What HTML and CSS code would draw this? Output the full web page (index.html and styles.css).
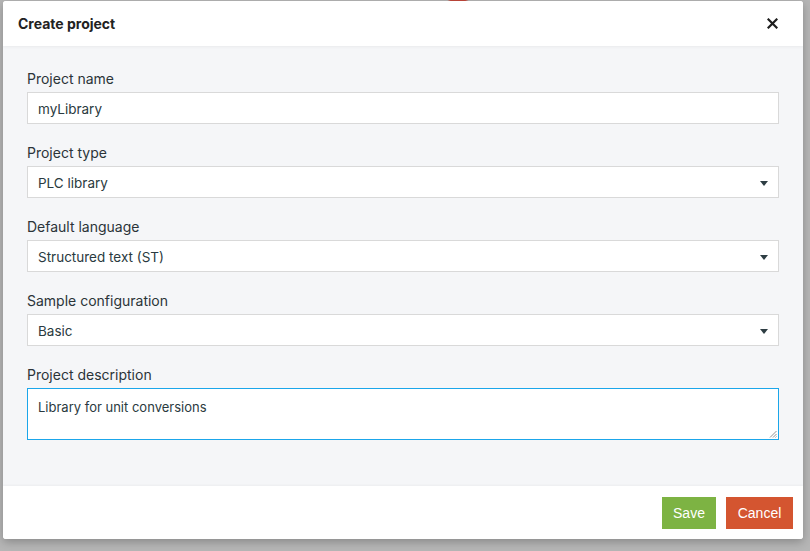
FILE: index.html
```html
<!DOCTYPE html>
<html>
<head>
<meta charset="utf-8">
<link rel="stylesheet" href="styles.css">
</head>
<body>
<div class="backdrop">
  <div class="bg-blob"></div>
  <div class="modal">
    <div class="modal-header">
      <span class="title">Create project</span>
      <span class="close" aria-label="close">
        <svg width="11" height="11" viewBox="0 0 11 11"><path d="M1.5 1.5 L9.5 9.5 M9.5 1.5 L1.5 9.5" stroke="#1e1e1e" stroke-width="2.2" stroke-linecap="square"/></svg>
      </span>
    </div>
    <div class="modal-body">
      <div class="field">
        <label class="label">Project name</label>
        <div class="input">myLibrary</div>
      </div>
      <div class="field">
        <label class="label">Project type</label>
        <div class="input select">PLC library<span class="caret"></span></div>
      </div>
      <div class="field">
        <label class="label">Default language</label>
        <div class="input select">Structured text (ST)<span class="caret"></span></div>
      </div>
      <div class="field">
        <label class="label">Sample configuration</label>
        <div class="input select">Basic<span class="caret"></span></div>
      </div>
      <div class="field last">
        <label class="label">Project description</label>
        <div class="input textarea">Library for unit conversions
          <svg class="grip" width="8" height="8" viewBox="0 0 8 8"><path d="M7.5 1 L1 7.5 M7.5 4 L4 7.5 M7.5 6.5 L6.5 7.5" stroke="#777" stroke-width="0.8"/></svg>
        </div>
      </div>
    </div>
    <div class="modal-footer">
      <button class="btn save">Save</button>
      <button class="btn cancel">Cancel</button>
    </div>
  </div>
</div>
</body>
</html>
```
FILE: styles.css
```css
* { box-sizing: border-box; }
html, body { margin: 0; padding: 0; }
body {
  width: 810px;
  height: 551px;
  overflow: hidden;
  background: #b6b6b6;
  font-family: Inter, "Noto Sans", sans-serif;
  color: #2b3940;
}
.backdrop {
  position: relative;
  width: 810px;
  height: 551px;
  padding: 1px 0 0 3px;
}
.bg-blob {
  position: absolute;
  left: 442px;
  top: -14px;
  width: 32px;
  height: 16px;
  border-radius: 50%;
  background: #c2473b;
}
.modal {
  position: relative;
  width: 800px;
  height: 538px;
  background: #fff;
  border-radius: 3px;
  box-shadow: 0 3px 10px rgba(0,0,0,0.25);
  display: flex;
  flex-direction: column;
  overflow: hidden;
}
.modal-header {
  height: 45px;
  display: flex;
  align-items: center;
  justify-content: space-between;
  padding: 0 25px 0 15px;
  background: #fff;
  box-shadow: 0 1px 3px rgba(0,0,0,0.05);
  position: relative;
  z-index: 1;
}
.title {
  font-size: 14px;
  font-weight: 700;
  color: #222;
}
.close { display: flex; align-items: center; }
.modal-body {
  flex: 1;
  background: #f5f6f8;
  padding: 24px 24px 0 24px;
}
.field { margin-bottom: 20px; }
.label {
  display: block;
  font-size: 14px;
  line-height: 17px;
  height: 22px;
  color: #2b3438;
}
.input {
  height: 32px;
  background: #fff;
  border: 1px solid #d9d9d9;
  font-size: 13.5px;
  line-height: 32px;
  padding: 0 10px;
  color: #2a3a40;
  position: relative;
}
.select .caret {
  position: absolute;
  right: 10px;
  top: 14px;
  width: 0;
  height: 0;
  border-left: 4.5px solid transparent;
  border-right: 4.5px solid transparent;
  border-top: 5px solid #2e3d43;
}
.textarea {
  height: 52px;
  border-color: #1ba6ea;
  font-size: 13px;
  line-height: 16px;
  padding-top: 10px;
}
.grip { position: absolute; right: 1px; bottom: 1px; }
.modal-footer {
  height: 53px;
  background: #fff;
  display: flex;
  justify-content: flex-end;
  align-items: center;
  gap: 10px;
  padding: 0 10px 0 0;
  box-shadow: 0 -1px 2px rgba(0,0,0,0.04);
}
.btn {
  height: 32px;
  border: none;
  color: #fff;
  font-family: "Liberation Sans", Arial, sans-serif;
  font-size: 14px;
  padding: 0;
  cursor: pointer;
}
.save { width: 54px; background: #7db343; }
.cancel { width: 67px; background: #d45530; }
```
